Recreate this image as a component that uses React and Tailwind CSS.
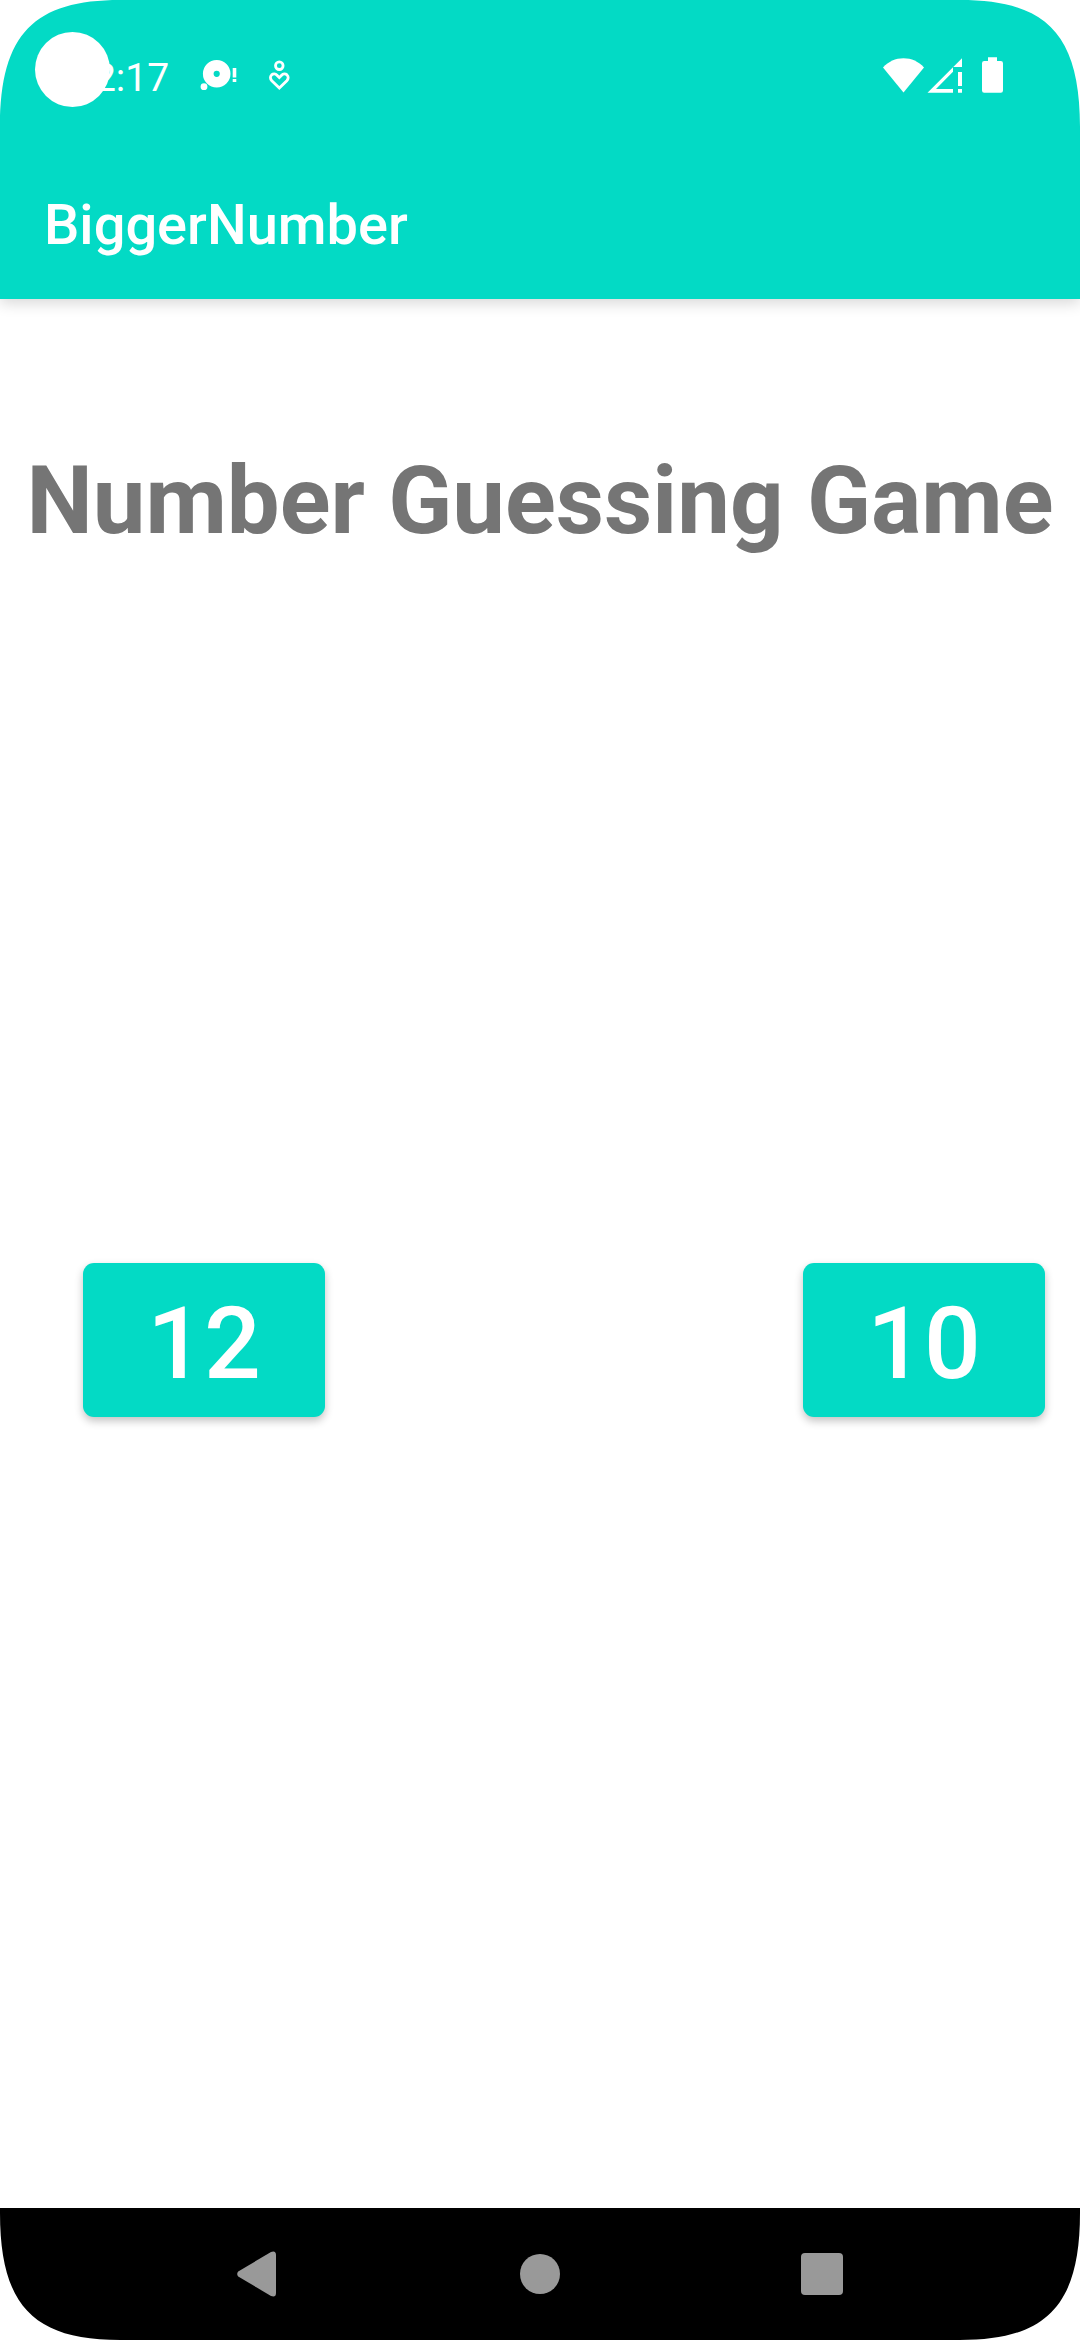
function ScreenCorner({ className }) {
  return (
    <svg aria-hidden="true" viewBox="0 0 120 127" className={`pointer-events-none absolute h-[127px] w-[120px] text-white ${className}`}>
      <path d="M0 0H120C35 0 0 33 0 127Z" fill="currentColor" />
    </svg>
  );
}

function StatusBar() {
  return (
    <div className="flex h-[154px] items-center pr-[76px] pl-[72px] text-white">
      <time className="pt-0.5 text-[39px] leading-none">12:17</time>
      <svg aria-label="Media notification" role="img" viewBox="198 57 40 40" className="ml-[29px] size-10" fill="currentColor">
        <path fillRule="evenodd" d="M216.7 60a13.8 13.8 0 1 1 0 27.6a13.8 13.8 0 1 1 0-27.6ZM216.7 70.7a3.1 3.1 0 1 0 0 6.2a3.1 3.1 0 1 0 0-6.2Z" />
        <circle cx="204" cy="86.7" r="3.4" />
        <path d="M232.7 68h3.6v9.5h-3.6ZM232.7 79h3.6v3h-3.6Z" />
      </svg>
      <svg aria-label="Wellbeing notification" role="img" viewBox="264 57 32 40" className="ml-[26px] h-10 w-8" fill="none" stroke="currentColor" strokeWidth="2.8">
        <circle cx="279.3" cy="65.7" r="3.8" />
        <path d="M279.3 88L271.8 80.7C270 78.8 270 76.4 271.6 74.9C273.2 73.5 275.6 73.7 277 75.2L279.3 77.6L281.6 75.2C283 73.7 285.4 73.5 287 74.9C288.6 76.4 288.6 78.8 286.8 80.7Z" />
      </svg>
      <div className="ml-auto flex items-center">
        <svg aria-label="Wi-Fi" role="img" viewBox="882 57 44 40" className="h-10 w-11" fill="currentColor">
          <path d="M903.5 92.5L883 67.5C888.5 61.5 895.5 58.3 903.5 58.3S918.5 61.5 924 67.5Z" />
        </svg>
        <svg aria-label="No mobile signal" role="img" viewBox="926 57 37 40" className="h-10 w-[37px]" fill="currentColor">
          <path d="M962 58.3L927.5 92.7H953V89H936L953 71.7V67H962ZM958 72h4v14h-4ZM958 89h4v3.7h-4Z" />
        </svg>
        <svg aria-label="Battery full" role="img" viewBox="981 57 23 40" className="ml-[18px] h-10 w-[23px]" fill="currentColor">
          <path d="M988 57.3h9V61h3.8a2.2 2.2 0 0 1 2.2 2.2v27.3a2.2 2.2 0 0 1-2.2 2.2h-16.6a2.2 2.2 0 0 1-2.2-2.2V63.2a2.2 2.2 0 0 1 2.2-2.2H988Z" />
        </svg>
      </div>
    </div>
  );
}

function NumberButton({ value }) {
  return (
    <button
      type="button"
      className="h-[154px] w-[242px] rounded-[11px] bg-[#03dac5] pt-2 text-[100px] leading-none font-medium text-white shadow-[0_4px_8px_rgba(0,0,0,0.24)]"
    >
      {value}
    </button>
  );
}

function NavigationBar() {
  return (
    <nav aria-label="System" className="grid h-[132px] grid-cols-3 bg-black px-[117px] text-[#999999]">
      <button type="button" aria-label="Back" className="flex items-center justify-center">
        <svg aria-hidden="true" viewBox="0 0 42 46" className="h-[46px] w-[42px]" fill="currentColor">
          <path d="M1.2 20.6L34 0.9Q39 -0.8 39 4V42Q39 46.8 34 45.1L1.2 25.4Q-0.8 23 1.2 20.6Z" />
        </svg>
      </button>
      <button type="button" aria-label="Home" className="flex items-center justify-center">
        <span className="size-10 rounded-full bg-[#999999]" />
      </button>
      <button type="button" aria-label="Recent apps" className="flex items-center justify-center">
        <span className="size-[42px] rounded-[4px] bg-[#999999]" />
      </button>
    </nav>
  );
}

export default function App() {
  return (
    <div className="relative flex min-h-screen flex-col bg-white font-[Roboto,sans-serif]">
      <header className="bg-[#03dac5] shadow-[0_4px_14px_rgba(0,0,0,0.16)]">
        <StatusBar />
        <div className="flex h-[145px] items-center px-11 pb-1 text-[56px] leading-none font-medium text-white">
          BiggerNumber
        </div>
      </header>
      <main className="flex flex-1 flex-col pt-[147px]">
        <h1 className="text-center text-[94px] leading-[110px] font-bold whitespace-nowrap text-[#757575]">
          Number Guessing Game
        </h1>
        <div className="mt-[707px] flex justify-between pr-[35px] pl-[83px]">
          <NumberButton value={12} />
          <NumberButton value={10} />
        </div>
      </main>
      <NavigationBar />
      <span aria-hidden="true" className="absolute top-8 left-[35px] size-[75px] rounded-full bg-white" />
      <ScreenCorner className="top-0 left-0" />
      <ScreenCorner className="top-0 right-0 -scale-x-100" />
      <ScreenCorner className="bottom-0 left-0 -scale-y-100" />
      <ScreenCorner className="right-0 bottom-0 rotate-180" />
    </div>
  );
}
